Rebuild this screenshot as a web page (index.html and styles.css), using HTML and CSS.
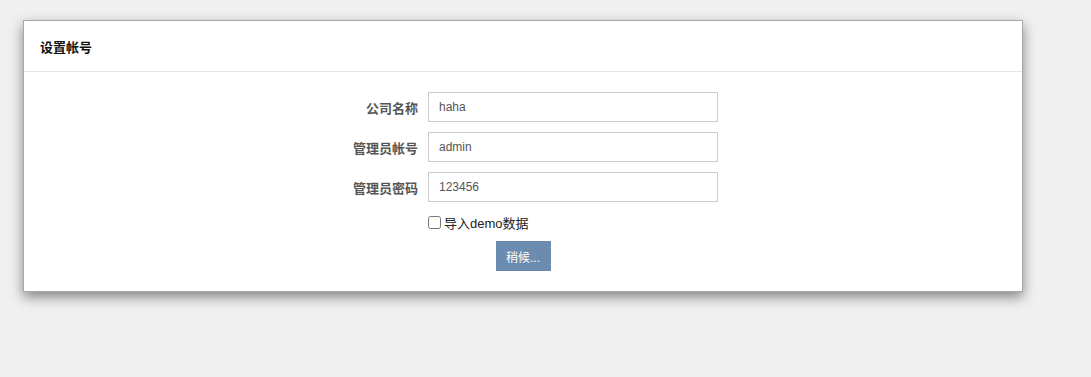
FILE: index.html
```
<html>
<head>
  <title>设置帐号</title>
  <meta http-equiv="Content-Type" content="text/html; charset=utf-8">
  <link rel="stylesheet" href="styles.css">
</head>
<body>
  <div class="panel">
    <div class="panel-head">
      <h4>设置帐号</h4>
    </div>
    <form class="panel-body">
      <div class="row">
        <label class="row-label">公司名称</label>
        <input class="field" type="text" value="haha" />
      </div>
      <div class="row">
        <label class="row-label">管理员帐号</label>
        <input class="field" type="text" value="admin" />
      </div>
      <div class="row">
        <label class="row-label">管理员密码</label>
        <input class="field" type="text" value="123456" />
      </div>
      <div class="row check-row">
        <span class="row-label"></span>
        <label class="check"><input type="checkbox" />导入demo数据</label>
      </div>
      <div class="actions">
        <button class="btn" type="button">稍候...</button>
      </div>
    </form>
  </div>
</body>
</html>
```

FILE: styles.css
```
html {
  box-sizing: border-box;
}
*, *:before, *:after {
  box-sizing: inherit;
}
body {
  margin: 0;
  padding: 20px 0 0 23px;
  background: #f0f0f0;
  font-family: "Liberation Sans", Arial, "Noto Sans CJK SC", sans-serif;
  font-size: 13px;
  color: #333;
}
.panel {
  width: 1000px;
  background: #fff;
  border: 1px solid #a8a8a8;
  box-shadow: 0 5px 12px rgba(0, 0, 0, 0.45);
}
.panel-head {
  height: 51px;
  padding: 0 16px;
  border-bottom: 1px solid #e5e5e5;
  display: flex;
  align-items: center;
}
.panel-head h4 {
  margin: 0;
  font-size: 13px;
  font-weight: bold;
  color: #111;
}
.panel-body {
  margin: 0;
  padding: 20px 0 20px;
  display: flex;
  flex-direction: column;
  gap: 10px;
}
.row {
  display: flex;
  align-items: center;
  gap: 10px;
}
.row-label {
  width: 394px;
  text-align: right;
  font-weight: bold;
  color: #555;
}
.field {
  width: 290px;
  height: 30px;
  padding: 0 10px;
  border: 1px solid #ccc;
  border-radius: 0;
  font-family: inherit;
  font-size: 12px;
  color: #555;
  outline: none;
}
.check-row {
  height: 20px;
}
.check {
  display: flex;
  align-items: center;
  color: #222;
  font-size: 13px;
  font-weight: normal;
}
.check input {
  margin: 0 3px 0 0;
  width: 13px;
  height: 13px;
}
.actions {
  display: flex;
  justify-content: center;
  margin-top: -1px;
}
.btn {
  width: 55px;
  height: 30px;
  border: none;
  background: #6b8cae;
  color: #fff;
  font-family: inherit;
  font-size: 12px;
  padding: 0;
}
```
